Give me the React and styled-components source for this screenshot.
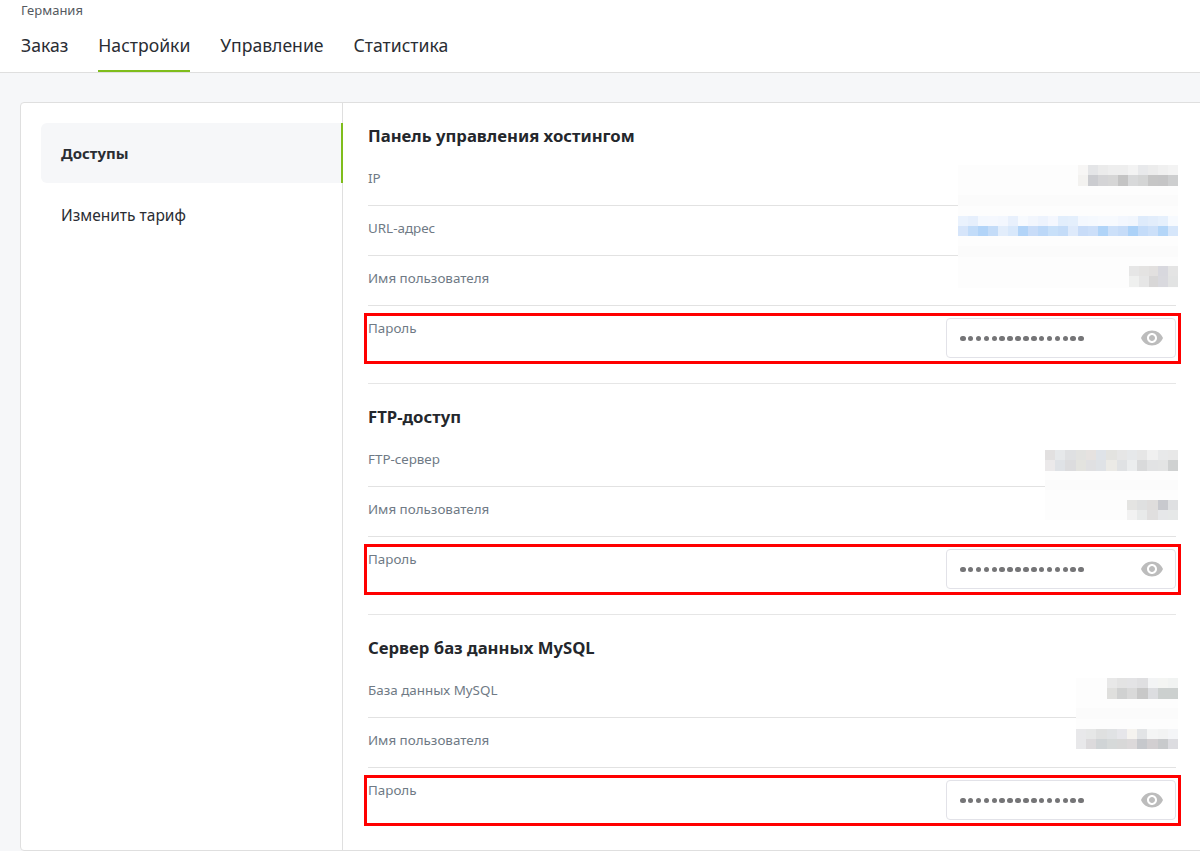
import React from 'react'
import styled, { createGlobalStyle } from 'styled-components'

const GlobalStyle = createGlobalStyle`
  html, body {
    margin: 0;
    padding: 0;
    height: 100%;
    overflow: hidden;
    background: #f6f7f9;
  }
  body {
    font-family: "Noto Sans", "Open Sans", sans-serif;
    color: #2a2d33;
  }
`

const Header = styled.header`
  background: #fff;
  border-bottom: 1px solid #dfdfdf;
  height: 72px;
  padding-left: 21px;
`
const Country = styled.div`
  font-size: 13px;
  line-height: 20px;
  color: #555a60;
`
const Tabs = styled.nav`
  display: flex;
  gap: 30px;
  margin-top: 2px;
`
const Tab = styled.a`
  height: 48px;
  line-height: 47px;
  font-size: 17.6px;
  color: #2a2d33;
  border-bottom: 2px solid ${(p) => (p.$active ? '#7fbd1c' : 'transparent')};
`

const Page = styled.div`
  padding: 29px 0 0 20px;
`
const Card = styled.div`
  display: flex;
  width: 1200px;
  height: 749px;
  box-sizing: border-box;
  background: #fff;
  border: 1px solid #dfdfdf;
  border-radius: 4px;
`
const Sidebar = styled.aside`
  flex: 0 0 322px;
  box-sizing: border-box;
  padding: 20px 0 0 20px;
  border-right: 1px solid #dfdfdf;
`
const SideItem = styled.div`
  height: 60px;
  line-height: 60px;
  margin: 0 -1px 2px 0;
  padding-left: 20px;
  font-size: ${(p) => (p.$active ? '15px' : '15.5px')};
  font-weight: ${(p) => (p.$active ? 700 : 400)};
  background: ${(p) => (p.$active ? '#f6f7f9' : 'transparent')};
  border-right: 2px solid ${(p) => (p.$active ? '#7fbd1c' : 'transparent')};
  border-radius: 6px 0 0 6px;
`
const Main = styled.main`
  width: 808px;
  margin-left: 25px;
`
const Section = styled.section`
  position: relative;
  padding-top: 21px;
  border-bottom: ${(p) => (p.$last ? 'none' : '1px solid #e6e6e6')};
`
const SectionTitle = styled.h2`
  margin: 0 0 8px;
  font-size: 16.7px;
  line-height: 24px;
  font-weight: 700;
  color: #24272c;
`
const Row = styled.div`
  position: relative;
  display: flex;
  justify-content: space-between;
  align-items: flex-start;
  box-sizing: border-box;
  height: ${(p) => (p.$tall ? '77px' : '50px')};
  padding-top: 12px;
  border-bottom: ${(p) => (p.$tall ? 'none' : '1px solid #e2e2e2')};
`
const Label = styled.span`
  font-size: 13.4px;
  line-height: 20px;
  color: #6f7a85;
`
const PasswordBox = styled.div`
  display: flex;
  align-items: center;
  justify-content: space-between;
  box-sizing: border-box;
  width: 230px;
  height: 40px;
  padding: 0 11px 0 13px;
  background: #fff;
  border: 1px solid #e2e2e8;
  border-radius: 4px;
`
const Dots = styled.span`
  display: flex;
  gap: 2.4px;
`
const Dot = styled.i`
  width: 5.5px;
  height: 5.5px;
  margin-top: 1px;
  border-radius: 50%;
  background: #757577;
`
const EyeIcon = styled.svg`
  width: 24px;
  height: 24px;
  fill: #bcbcbc;
`
const RedFrame = styled.div`
  position: absolute;
  left: -4px;
  right: -5px;
  top: 7px;
  height: 51px;
  box-sizing: border-box;
  border: 3px solid #ff0000;
  pointer-events: none;
`

// pixelated patches that hide the real values
const Patch = styled.div`
  position: absolute;
  top: ${(p) => p.$top}px;
  right: -2px;
  width: ${(p) => p.$width}px;
  height: ${(p) => p.$height}px;
  display: flex;
  flex-direction: column;
  align-items: flex-end;
  background: #fdfdfd;
`
const Strip = styled.div`
  display: grid;
  grid-template-columns: repeat(${(p) => p.$cols}, 1fr);
  grid-auto-rows: 10.25px;
  width: ${(p) => p.$width}px;
`
const Cell = styled.div`
  background: ${(p) => p.$color};
`
const Band = styled.div`
  align-self: stretch;
  height: 11px;
  margin: 9.5px 0;
  background: #fbfbfb;
`

const patches = {
  ip: {
    width: 100,
    rows: [
      ['f7f6f5', 'e4e5e7', 'ebebeb', 'eeeeee', 'eeeeee', 'f3f3f3', 'e8e9eb', 'ececec', 'f0f0f0', 'f3f3f3'],
      ['f3f2f0', 'cbccd0', 'd4d4d6', 'd6d6d6', 'c4c4c4', 'd8d9da', 'd4d5d5', 'c6c6c6', 'c5c5c6', 'cdcecf'],
    ],
  },
  url: {
    width: 220,
    rows: [
      ['eaf2fd', 'e6effc', 'f4f8fe', 'f5f8fe', 'f3f7fe', 'e8f0fc', 'f7fafe', 'f2f6fd', 'edf3fd', 'f4f7fe', 'e2eefc', 'e4effc', 'f4f8fe', 'f5f9fe', 'f7fafe', 'f7fafe', 'f3f7fe', 'f1f6fd', 'deebfb', 'e2edfb', 'e6f0fc', 'f7fafe'],
      ['d6e5fa', 'c2dcf9', 'b2d4f8', 'c4dcf8', 'e2edfb', 'd8e8fb', 'b2d4f8', 'c8dcf8', 'bcd8f8', 'c8e0f9', 'c4dcf8', 'deeafb', 'c8dcf8', 'ccdff9', 'b0d4f8', 'cce0f9', 'c6dcf8', 'acd2f8', 'c4dcf9', 'cce0f9', 'b4d6f8', 'd6e6fa'],
    ],
  },
  user1: {
    width: 49,
    rows: [
      ['e6e6e6', 'e4e3e2', 'e2e0df', 'd8d8de', 'e4e4e4'],
      ['eff0ef', 'e6e6e6', 'd8d7d7', 'd9d9de', 'e2e3e3'],
    ],
  },
  ftp: {
    width: 133,
    rows: [
      ['e2e0e0', 'e6e8ea', 'dfe0e2', 'e2e2e0', 'e6e2e0', 'dfe3e8', 'e3e3e0', 'e6e6e6', 'e6e8ea', 'e6e6e6', 'f0f0f0', 'e8e9ea', 'e8e8e8'],
      ['ebe9ea', 'dfe2e6', 'dcdcde', 'e3e3df', 'e0e0e2', 'dfe2e6', 'ebeae6', 'e0e2e4', 'ebedee', 'd9dadb', 'e2e3e4', 'e3e4e4', 'cfd1d1'],
    ],
  },
  user2: {
    width: 51,
    rows: [
      ['e4e4e2', 'dfe0e0', 'dfdddc', 'c8c9ce', 'dfe0e2'],
      ['f2f2f2', 'e8eaea', 'e0dfdf', 'e6e7e9', 'e6e8e8'],
    ],
  },
  db: {
    width: 71,
    rows: [
      ['e8e8e8', 'e3e3e3', 'e3e3e5', 'dfdfe1', 'f3f4f5', 'f4f5f3', 'f1f3f2'],
      ['dfdfdd', 'd0d1d1', 'd9d9d9', 'c8c8c8', 'dcdde0', 'ccd0cf', 'ccd0cf'],
    ],
  },
  user3: {
    width: 102,
    rows: [
      ['e8e8ea', 'e6e7e7', 'dfe0e0', 'e0e2e4', 'e6e6ea', 'f5f3ef', 'e2e4e6', 'f4f5f5', 'f2f3f3', 'f4f5f7'],
      ['e8e8ea', 'dcdadc', 'd0d4d6', 'd6d9d9', 'd8d8d8', 'dcd9da', 'c6c8cc', 'd2cfd1', 'c8cacc', 'dcdce0'],
    ],
  },
}

function Pixels({ name }) {
  const { width, rows } = patches[name]
  return (
    <Strip $cols={rows[0].length} $width={width}>
      {rows.flat().map((color, i) => (
        <Cell key={i} $color={`#${color}`} />
      ))}
    </Strip>
  )
}

function PasswordRow() {
  return (
    <Row $tall>
      <Label>Пароль</Label>
      <PasswordBox>
        <Dots>
          {Array.from({ length: 16 }, (_, i) => (
            <Dot key={i} />
          ))}
        </Dots>
        <EyeIcon viewBox="0 0 24 24">
          <path d="M12 4.5C7 4.5 2.73 7.61 1 12c1.73 4.39 6 7.5 11 7.5s9.27-3.11 11-7.5c-1.73-4.39-6-7.5-11-7.5zM12 17c-2.76 0-5-2.24-5-5s2.24-5 5-5 5 2.24 5 5-2.24 5-5 5zm0-8c-1.66 0-3 1.34-3 3s1.34 3 3 3 3-1.34 3-3-1.34-3-3-3z" />
        </EyeIcon>
      </PasswordBox>
      <RedFrame />
    </Row>
  )
}

export default function App() {
  return (
    <>
      <GlobalStyle />
      <Header>
        <Country>Германия</Country>
        <Tabs>
          <Tab>Заказ</Tab>
          <Tab $active>Настройки</Tab>
          <Tab>Управление</Tab>
          <Tab>Статистика</Tab>
        </Tabs>
      </Header>
      <Page>
        <Card>
          <Sidebar>
            <SideItem $active>Доступы</SideItem>
            <SideItem>Изменить тариф</SideItem>
          </Sidebar>
          <Main>
            <Section>
              <SectionTitle>Панель управления хостингом</SectionTitle>
              <Row><Label>IP</Label></Row>
              <Row><Label>URL-адрес</Label></Row>
              <Row><Label>Имя пользователя</Label></Row>
              <PasswordRow />
              <Patch $top={62} $width={220} $height={123}>
                <Pixels name="ip" />
                <Band />
                <Pixels name="url" />
                <Band />
                <Pixels name="user1" />
              </Patch>
            </Section>
            <Section>
              <SectionTitle>FTP-доступ</SectionTitle>
              <Row><Label>FTP-сервер</Label></Row>
              <Row><Label>Имя пользователя</Label></Row>
              <PasswordRow />
              <Patch $top={66} $width={133} $height={70}>
                <Pixels name="ftp" />
                <Band />
                <Pixels name="user2" />
              </Patch>
            </Section>
            <Section $last>
              <SectionTitle>Сервер баз данных MySQL</SectionTitle>
              <Row><Label>База данных MySQL</Label></Row>
              <Row><Label>Имя пользователя</Label></Row>
              <PasswordRow />
              <Patch $top={63} $width={102} $height={71}>
                <Pixels name="db" />
                <Band />
                <Pixels name="user3" />
              </Patch>
            </Section>
          </Main>
        </Card>
      </Page>
    </>
  )
}
